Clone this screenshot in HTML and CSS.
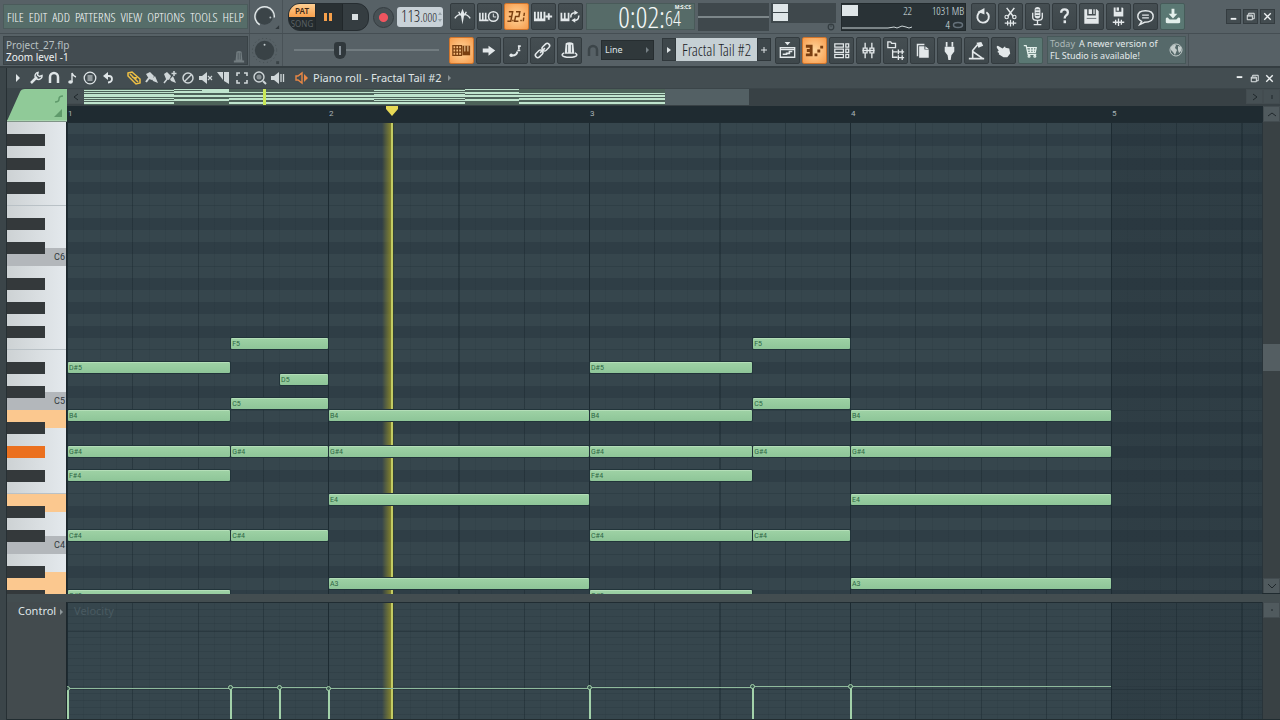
FILE: index.html
```html
<!DOCTYPE html>
<html lang="en">
<head>
<meta charset="utf-8">
<title>Piano roll - Fractal Tail #2</title>
<link rel="stylesheet" href="styles.css">
</head>
<body>
<header class="top">
  <div class="bar bar-one">
    <nav class="menu">
      <button>FILE</button><button>EDIT</button><button>ADD</button><button>PATTERNS</button><button>VIEW</button><button>OPTIONS</button><button>TOOLS</button><button>HELP</button>
    </nav>
    <button class="knob" aria-label="Main volume"><svg viewBox="0 0 34 34"><circle cx="15" cy="17" r="8.500" fill="#3b4448"/><path d="M10 25.500A10 10 0 1 1 25 18" fill="none" stroke="#e2e8e9" stroke-width="1.500"/><circle cx="21" cy="18" r="1" fill="#b9c2c5"/><path d="M26 30l4-4v4z" fill="#30383c"/></svg></button>
    <div class="transport">
      <div class="mode"><button class="pat">PAT</button><button class="song">SONG</button></div>
      <button class="pause" aria-label="Pause"><svg viewBox="0 0 26 26"><path d="M8 9h3v8H8zM13 9h3v8h-3z" fill="#f6a04b"/></svg></button>
      <button class="stop" aria-label="Stop"><svg viewBox="0 0 26 26"><path d="M9 10h6v6H9z" fill="#d9dfe1"/></svg></button>
    </div>
    <button class="record" aria-label="Record"></button>
    <div class="tempo"><span>113<small>.000</small></span><svg viewBox="0 0 6 16"><path d="M1 6l2-3 2 3zM1 10l2 3 2-3z" fill="#9aa5ab"/></svg></div>
    <div class="tools tools-a">
      <button class="tool" aria-label="Metronome"><svg viewBox="0 0 24 24"><path d="M4 14C7 8 17 8 20 14M8 7l2 4M16 7l-2 4" fill="none" stroke="currentColor" stroke-width="1.500"/><path d="M12 4l2 5-2 11-2-11z" fill="currentColor"/></svg></button>
      <button class="tool" aria-label="Wait for input"><svg viewBox="0 0 24 24"><path d="M2 8v8h9M5 8v8M8 8v8M2 16h8" fill="none" stroke="currentColor" stroke-width="1.700"/><circle cx="16" cy="12" r="5" fill="#434c50" stroke="currentColor" stroke-width="1.600"/><path d="M16 9v3.500h3" fill="none" stroke="currentColor"/></svg></button>
      <button class="tool lit" aria-label="Countdown"><svg viewBox="0 0 24 24"><path d="M4 7h4l-1 5H4M7 12l-1 5H2.500M11.500 7h4l-1 5h-3.500l-1 5h4" fill="none" stroke="currentColor" stroke-width="1.500"/><path d="M7.500 15.500H9V17H7.500zM16 15.500h1.500V17H16zM19.500 8H21l-.5 3.500H19zM18.800 13h1.500l-.5 4h-1.500z" fill="currentColor"/></svg></button>
      <button class="tool" aria-label="Overdub"><svg viewBox="0 0 24 24"><path d="M3 7v9h10V7M6.500 7v8M9.500 7v8M3 15h10" fill="none" stroke="currentColor" stroke-width="1.900"/><path d="M14 12h7M17.500 8.500v7" stroke="currentColor" stroke-width="2"/></svg></button>
      <button class="tool" aria-label="Loop recording"><svg viewBox="0 0 24 24"><path d="M2.500 8v8H10V8M6 8v7M2.500 15H10" fill="none" stroke="currentColor" stroke-width="1.800"/><path d="M12.500 13a4 4 0 0 1 4-5M20.500 11a4 4 0 0 1-4 5" fill="none" stroke="currentColor" stroke-width="1.600"/><path d="M16 5.500l4 2.500-4 2.500zM17 18.500L13 16l4-2.500z" fill="currentColor"/></svg></button>
    </div>
    <output class="clock"><b>0:02:</b><span class="cents"><small>M:S:CS</small><i>64</i></span></output>
    <div class="monitor"><div class="wave"></div><div class="meter"></div><svg viewBox="0 0 10 10"><circle cx="5" cy="5" r="3.500" fill="none" stroke="#343d41" stroke-width="1.500"/><path d="M5 5V2" stroke="#343d41"/></svg></div>
    <div class="cpu">
      <div class="load"><span class="block"></span><span class="num">22</span><svg viewBox="0 0 70 6"><path d="M0 4h46l6-1 3 1 5-2 4 1 3 1 3-1" fill="none" stroke="#cdd6d8"/></svg></div>
      <div class="mem"><span>1031 MB</span><span>4 <svg viewBox="0 0 12 8"><ellipse cx="6" cy="4" rx="4.500" ry="2.500" fill="none" stroke="#65717a" stroke-width="1.500"/></svg></span></div>
    </div>
    <div class="tools tools-b">
      <button class="tool" aria-label="Undo"><svg viewBox="0 0 24 24"><path d="M15 7.500A6 6 0 1 1 9 7" fill="none" stroke="currentColor" stroke-width="2"/><path d="M6 7l7-4v7z" fill="currentColor"/></svg></button>
      <button class="tool" aria-label="Cut"><svg viewBox="0 0 24 24"><path d="M8 3l7 9M16 3l-7 9" stroke="currentColor" stroke-width="1.600"/><circle cx="8" cy="12.500" r="1.800" fill="none" stroke="currentColor" stroke-width="1.200"/><circle cx="16" cy="12.500" r="1.800" fill="none" stroke="currentColor" stroke-width="1.200"/><path d="M6 19h12M9 16.500v5M12 15.500v7M15 16.500v5" stroke="currentColor" stroke-width="1.300"/></svg></button>
      <button class="tool" aria-label="Record audio"><svg viewBox="0 0 24 24"><rect x="9" y="2" width="6" height="12" rx="3" fill="currentColor"/><path d="M7 8v5q0 3 5 3t5-3V8M12 16v4M8 20.500h8" fill="none" stroke="currentColor" stroke-width="1.400"/><path d="M10 5h4M10 8h4M10 11h4" stroke="#566165"/></svg></button>
      <button class="tool" aria-label="Help"><svg viewBox="0 0 24 24"><path d="M8.500 8q0-3.500 3.500-3.500t3.500 3.200q0 2-2 3.300-1.300 1-1.300 3" fill="none" stroke="currentColor" stroke-width="2.400"/><path d="M11 16h2.600v3H11z" fill="currentColor"/></svg></button>
      <button class="tool" aria-label="Save"><svg viewBox="0 0 24 24"><path d="M4.500 4.500h3V11h9V4.500h1l2 2V19.500h-15z" fill="currentColor"/><path d="M9 4.500h3.500v5H9zM14 4.500h1.300v5H14z" fill="currentColor"/><path d="M7 14h10" stroke="#697377"/></svg></button>
      <button class="tool" aria-label="Save new version"><svg viewBox="0 0 24 24"><path d="M7 2.500h2V7h6V2.500h1l1 1V12H7z" fill="currentColor"/><path d="M10 2.500h2.500V6H10z" fill="currentColor"/><path d="M6 18h12M9 15.500v5M12 14v8M15 15.500v5" stroke="currentColor" stroke-width="1.400"/></svg></button>
      <button class="tool" aria-label="Project info"><svg viewBox="0 0 24 24"><path d="M8 17l-2 3.500 5-2.500q9 0 9-6 0-6-8-6t-8 6q0 3 4 5z" fill="none" stroke="currentColor" stroke-width="1.500"/><path d="M8.500 10.500h7M8.500 13.500h7" stroke="currentColor" stroke-width="1.300"/></svg></button>
      <button class="tool green" aria-label="Update"><svg viewBox="0 0 24 24"><path d="M11 4h3v5h3l-4.500 5L8 9h3z" fill="currentColor"/><path d="M5 14q0-1 2-1l2 2h7l2-2q2 0 2 1v4q0 1-2 1H7q-2 0-2-1z" fill="currentColor"/></svg></button>
    </div>
    <div class="win">
      <button aria-label="Minimise"><svg viewBox="0 0 14 14"><path d="M4 8.500h6v2H4z" fill="currentColor"/></svg></button>
      <button aria-label="Restore"><svg viewBox="0 0 14 14"><path d="M5 5V3.500h6v6H9.500M3.500 5.500h5.500v5H3.500zM3.500 6.500h5" fill="none" stroke="currentColor"/></svg></button>
      <button aria-label="Close"><svg viewBox="0 0 14 14"><path d="M3.500 3.500l7 7M10.500 3.500l-7 7" stroke="currentColor" stroke-width="1.500"/></svg></button>
    </div>
  </div>
  <div class="bar bar-two">
    <div class="hint"><div><p class="file">Project_27.flp</p><p class="msg">Zoom level -1</p></div><svg viewBox="0 0 14 16"><path d="M4 2q3-2 6 0l1 10H3zM1 12h12v2.500H1z" fill="#727c80"/><path d="M6 3v8M8.500 3v8" stroke="#4d575b"/></svg></div>
    <button class="knob" aria-label="Main pitch"><svg viewBox="0 0 34 34"><circle cx="15" cy="17" r="12.500" fill="none" stroke="#434c50" stroke-dasharray="1 3"/><circle cx="15" cy="17" r="10" fill="#394246"/><circle cx="15" cy="11" r="1" fill="#c5ced0"/><path d="M27 28h3v3h-3z" fill="#3a4347"/></svg></button>
    <div class="shift"><input type="range" min="0" max="100" value="30" aria-label="Song position"></div>
    <div class="tools tools-c">
      <button class="tool lit" aria-label="Typing keyboard to piano"><svg viewBox="0 0 24 24"><path d="M3 7h9v10H3zM6 7v10M9 7v10M3 10.300h9M3 13.600h9" fill="none" stroke="currentColor" stroke-width="1.300"/><path d="M13 7h8v10h-8z" fill="currentColor"/><path d="M15.500 7v6M18.700 7v6" stroke="#ffe0ae" stroke-width="1"/></svg></button>
      <button class="tool" aria-label="Step edit"><svg viewBox="0 0 24 24"><path d="M6 10h6V7l7 5-7 5.500V14H6z" fill="currentColor"/></svg></button>
      <button class="tool" aria-label="Glide"><svg viewBox="0 0 24 24"><path d="M7 17q6 1 7-4" fill="none" stroke="currentColor" stroke-width="2"/><circle cx="7.500" cy="17" r="1.800" fill="currentColor"/><path d="M14 12h3M15.500 11V7M14.500 7.500h3" stroke="currentColor" stroke-width="1.700"/></svg></button>
      <button class="tool" aria-label="Link"><svg viewBox="0 0 24 24" fill="none" stroke="currentColor" stroke-width="1.600"><rect x="11" y="6" width="9" height="5" rx="2.500" transform="rotate(-45 15.500 8.500)"/><rect x="4" y="13" width="9" height="5" rx="2.500" transform="rotate(-45 8.500 15.500)"/><path d="M9.500 14.500l5-5"/></svg></button>
      <button class="tool" aria-label="Multilink"><svg viewBox="0 0 24 24"><path d="M8 4.500q4-2 8 0l1 11H7z" fill="currentColor"/><path d="M6.500 14.500q-2.500 1-2 2.500 1 2 7.500 2t7.500-2q.5-1.500-2-2.500" fill="none" stroke="currentColor" stroke-width="1.600"/><path d="M10 6v8M14 6v8" stroke="#566165"/></svg></button>
    </div>
    <svg class="snap-icon" viewBox="0 0 12 14"><path d="M2 12V6a4 4 0 0 1 8 0v6" fill="none" stroke="#3c4549" stroke-width="2.500"/></svg>
    <button class="snap">Line<svg viewBox="0 0 4 6"><path d="M0 0l3 3-3 3z" fill="#768085"/></svg></button>
    <div class="pattern">
      <button class="side" aria-label="Pattern menu"><svg viewBox="0 0 8 8"><path d="M2 1l4 3-4 3z" fill="currentColor"/></svg></button>
      <button class="name">Fractal Tail #2</button>
      <button class="side" aria-label="Add pattern"><svg viewBox="0 0 8 8"><path d="M4 1v6M1 4h6" stroke="currentColor"/></svg></button>
    </div>
    <div class="tools tools-d">
      <button class="tool" aria-label="Playlist"><svg viewBox="0 0 24 24"><path d="M9 3h6l-3 3.500z" fill="currentColor"/><path d="M4.500 9h15v10h-15zM4.500 11h15" fill="none" stroke="currentColor" stroke-width="1.400"/><path d="M7 16h4v-1h3v-2h3" fill="none" stroke="currentColor" stroke-width="1.600"/></svg></button>
      <button class="tool lit" aria-label="Piano roll"><svg viewBox="0 0 24 24"><path d="M3 6h7v12H3v-3h4v-1.500H4v-3h3V9H3z" fill="currentColor"/><path d="M12 15h3v3h-3zM15 11h3v3h-3zM18 7h3v3h-3z" fill="currentColor"/></svg></button>
      <button class="tool" aria-label="Channel rack"><svg viewBox="0 0 24 24" fill="none" stroke="currentColor" stroke-width="1.300"><path d="M5 5h9v3.500H5zM5 10.500h9V14H5zM5 16h9v3.500H5zM16.500 5h3v3.500h-3zM16.500 10.500h3V14h-3zM16.500 16h3v3.500h-3z"/></svg></button>
      <button class="tool" aria-label="Mixer"><svg viewBox="0 0 24 24" fill="none" stroke="currentColor" stroke-width="1.400"><path d="M8.500 4v5M8.500 15v5M15.500 4v5M15.500 15v5M6.500 9.500h4v5h-4zM13.500 9.500h4v5h-4zM5.500 12h13"/></svg></button>
      <button class="tool" aria-label="Browser"><svg viewBox="0 0 24 24" fill="none" stroke="currentColor" stroke-width="1.400"><path d="M4 3h3l1 1.500h4V9H4zM9 11v8h5M9 13.500h5"/><path d="M15 11v5M15 17v5M19 11v5M19 17v5M14 13.500h7M14 19.500h7"/></svg></button>
      <button class="tool" aria-label="Patterns"><svg viewBox="0 0 24 24"><path d="M6 5h8v1.500H7.500V18H6z" fill="currentColor"/><path d="M8.500 7.500H14V11h4.500v8.500h-10zM15 7.500l3.500 3H15z" fill="currentColor"/></svg></button>
      <button class="tool" aria-label="Plugins"><svg viewBox="0 0 24 24"><path d="M9 3v5M15 3v5" stroke="currentColor" stroke-width="1.800"/><path d="M7 8h10v5l-3 4-.8 5h-2.400L10 17l-3-4z" fill="currentColor"/></svg></button>
      <button class="tool" aria-label="Tempo tapper"><svg viewBox="0 0 24 24"><path d="M12 4l5-1 2 4-5 2z" fill="currentColor"/><path d="M13 6L8 12v8M8 13l10 7M4 20.500h16" fill="none" stroke="currentColor" stroke-width="1.700"/></svg></button>
      <button class="tool" aria-label="Touch controller"><svg viewBox="0 0 24 24"><path d="M5 7.500q1-1 2 0l4 2.500 2-2q1-.5 1 1l4 1 1 5-3 4h-4l-5-3 .5-1.500-2-1L7 12l-2-3z" fill="currentColor"/></svg></button>
      <button class="tool green" aria-label="Shop"><svg viewBox="0 0 24 24" fill="none" stroke="currentColor" stroke-width="1.300"><path d="M5 7h2.500l2 9H18M8 9h10l-1 5H9M12 9v5M15 9v5M8.500 11.500h9"/><circle cx="10.500" cy="18" r="1"/><circle cx="16.500" cy="18" r="1"/></svg></button>
    </div>
    <a class="news" href="#"><span><em>Today</em>A newer version of<br>FL Studio is available!</span><svg viewBox="0 0 14 14"><circle cx="7" cy="7" r="6" fill="none" stroke="#c3cccb" stroke-width="1"/><path d="M2 4q3-3 5-2L6 5l2 2-2 5-2-3-2-2zM9 3l3 1v4l-2 2-1-3z" fill="#c3cccb"/></svg></a>
    <div class="rest"></div>
  </div>
</header>

<main class="roll">
  <div class="title">
    <div class="acts">
      <button aria-label="Menu"><svg viewBox="0 0 16 16"><path d="M6 4l4 4-4 4z" fill="currentColor"/></svg></button>
      <button aria-label="Tools"><svg viewBox="0 0 16 16"><path d="M3 13l6-6" stroke="currentColor" stroke-width="2.500"/><path d="M14 5.500A3.500 3.500 0 1 1 10 2.500L9.500 5l2 1.500z" fill="none" stroke="currentColor" stroke-width="1.500"/></svg></button>
      <button aria-label="Snap"><svg viewBox="0 0 16 16"><path d="M4 13V7a4 4 0 0 1 8 0v6" fill="none" stroke="currentColor" stroke-width="2.500"/></svg></button>
      <button aria-label="Stamp"><svg viewBox="0 0 16 16"><path d="M8 12V3q1 3 4 4" fill="none" stroke="currentColor" stroke-width="1.400"/><ellipse cx="6.500" cy="12" rx="2.300" ry="1.800" fill="currentColor"/></svg></button>
      <button aria-label="Ghost notes"><svg viewBox="0 0 16 16"><circle cx="8" cy="8" r="5.800" fill="none" stroke="currentColor" stroke-width="1.300"/><path d="M5.500 6h5M5.500 8h5M5.500 10h5" stroke="currentColor"/></svg></button>
      <button aria-label="Undo"><svg viewBox="0 0 16 16"><path d="M5 6h4q3 0 3 3t-4 3.500" fill="none" stroke="currentColor" stroke-width="1.800"/><path d="M8 2v8L3 6z" fill="currentColor"/></svg></button>
    </div>
    <div class="acts brushes">
      <button class="draw" aria-label="Draw"><svg viewBox="0 0 16 16"><path d="M2 3l4-1 8 7v4l-4 1-8-8zM4 4l8 8M6 7l5 1" fill="none" stroke="currentColor" stroke-width="1.500"/></svg></button>
      <button aria-label="Paint"><svg viewBox="0 0 16 16"><path d="M2 4l4-2 4 4-2 4-3-1zM8 9l3-3 3 7-5-2z" fill="currentColor"/><path d="M2 12l3-4" stroke="currentColor" stroke-width="2"/></svg></button>
      <button aria-label="Paint sequence"><svg viewBox="0 0 16 16"><path d="M2 4l3-2 4 4-2 4-3-1zM8 9l3-3 3 7-5-2z" fill="currentColor"/><path d="M2 13l4-5M12 1v5M9.500 3.500h5" stroke="currentColor" stroke-width="1.500"/></svg></button>
      <button aria-label="Delete"><svg viewBox="0 0 16 16"><circle cx="8" cy="8" r="5" fill="none" stroke="currentColor" stroke-width="1.500"/><path d="M4.500 11.500l7-7" stroke="currentColor" stroke-width="1.500"/></svg></button>
      <button aria-label="Mute"><svg viewBox="0 0 16 16"><path d="M1 6h3l5-4v12L4 10H1z" fill="currentColor"/><path d="M10 6l4 4M14 6l-4 4" stroke="currentColor" stroke-width="1.200"/></svg></button>
      <button aria-label="Slice"><svg viewBox="0 0 16 16"><path d="M1 2h6v8zM8 2h5v12l-5-3z" fill="currentColor"/></svg></button>
      <button aria-label="Select"><svg viewBox="0 0 16 16"><path d="M6 3H3v3M10 3h3v3M6 13H3v-3M10 13h3v-3" fill="none" stroke="currentColor" stroke-width="1.600"/></svg></button>
      <button aria-label="Zoom"><svg viewBox="0 0 16 16"><circle cx="7" cy="7" r="5" fill="none" stroke="currentColor" stroke-width="1.400"/><circle cx="7" cy="7" r="2.500" fill="currentColor" opacity=".5"/><path d="M11 11l3 3" stroke="currentColor" stroke-width="2"/></svg></button>
      <button aria-label="Playback"><svg viewBox="0 0 16 16"><path d="M1 6h3l5-4v12L4 10H1z" fill="currentColor"/><path d="M11 4v8M13.500 4v8" stroke="currentColor" stroke-width="1.300"/></svg></button>
    </div>
    <svg class="speaker" viewBox="0 0 14 14"><path d="M1 5h2l4-3v10L3 9H1z" fill="none" stroke="#e98745" stroke-width="1.400"/><path d="M9 3l4 4-4 4z" fill="#e98745"/></svg>
    <h1>Piano roll - Fractal Tail #2</h1>
    <svg class="chev" viewBox="0 0 4 6"><path d="M0 0l3 3-3 3z" fill="#868f92"/></svg>
    <div class="win flat">
      <button aria-label="Minimise roll"><svg viewBox="0 0 14 14"><path d="M4 4.500h6v2H4z" fill="currentColor"/></svg></button>
      <button aria-label="Restore roll"><svg viewBox="0 0 14 14"><path d="M5 5V3.500h6v6H9.500M3.500 5.500h5.500v5H3.500zM3.500 6.500h5" fill="none" stroke="currentColor"/></svg></button>
      <button aria-label="Close roll"><svg viewBox="0 0 14 14"><path d="M3.500 3.500l7 7M10.500 3.500l-7 7" stroke="currentColor" stroke-width="1.500"/></svg></button>
    </div>
  </div>

  <div class="head">
    <svg class="corner" viewBox="0 0 60 33"><path d="M0 32L13 3q1-3 5-3h42v32z" fill="#90ca98"/><path d="M0 32h60" stroke="#c3e3c6"/><path d="M48 13q4 0 4-3t4-3" fill="none" stroke="#5f9a6b" stroke-width="1.500"/><path d="M47 28l8-8v8z" fill="#5f9a6b"/></svg>
    <div class="rails">
      <div class="scroller">
        <button class="arrow" aria-label="Scroll left"><svg viewBox="0 0 8 8"><path d="M6 1L2 4l4 3" fill="none" stroke="#1f272b"/></svg></button>
        <svg class="overview" viewBox="0 0 665 16"><rect width="665" height="16" fill="#536064"/><rect width="581" height="16" fill="#4d6259"/>
          <g fill="#bfe4cd"><path d="M0 1h90v1H0zM0 3h90v1H0zM0 5h90v3H0zM0 9h90v1H0zM0 11h90v1H0zM0 13h90v2H0z"/><path d="M90 0h55v1H90zM118 1h27v2h-27zM90 2h55v2H90zM90 6h55v2H90zM90 10h55v2H90z"/><path d="M145 3h145v1H145zM145 6h145v2H145zM145 9h145v2H145zM145 13h145v2H145z"/><path d="M290 1h91v1h-91zM290 3h91v1h-91zM290 5h91v3h-91zM290 9h91v1h-91zM290 11h91v1h-91zM290 13h91v2h-91z"/><path d="M381 0h54v1h-54zM381 3h54v2h-54zM381 6h54v2h-54zM381 10h54v2h-54z"/><path d="M435 4h146v1H435zM435 6h146v2H435zM435 9h146v2H435zM435 13h146v2H435z"/></g>
          <rect x="179" width="3" height="16" fill="#c9e857"/></svg>
        <button class="arrow end" aria-label="Scroll right"><svg viewBox="0 0 8 8"><path d="M2 1l4 3-4 3" fill="none" stroke="#1f272b"/></svg></button>
        <button class="arrow" aria-label="Zoom"><svg viewBox="0 0 8 8"><path d="M4 2v4" stroke="#1f272b"/></svg></button>
      </div>
      <div class="ruler">
        <ol><li>1</li><li>2</li><li>3</li><li>4</li><li>5</li></ol>
        <svg class="marker" viewBox="0 0 12 10"><path d="M0 0h12v3L6 10 0 3z" fill="#e7d956"/></svg>
        <button class="arrow" aria-label="Scroll up"><svg viewBox="0 0 8 8"><path d="M0 6l4-3 4 3" fill="none" stroke="#1f272b"/></svg></button>
      </div>
    </div>
  </div>

  <div class="editor">
    <div class="piano">
      <span class="key c" style="--row:11">C6</span><span class="key c" style="--row:23">C5</span><span class="key c" style="--row:35">C4</span>
      <span class="key hot down" style="--row:24"></span><span class="key hot down" style="--row:31"></span><span class="key hot up" style="--row:38"></span>
      <span class="blacks"></span><span class="key sharp" style="--row:27"></span>
    </div>
    <div class="grid">
      <span class="playhead"></span>
      <span class="note" style="--start:10;--len:6;--row:18">F5</span>
      <span class="note" style="--start:42;--len:6;--row:18">F5</span>
      <span class="note" style="--start:0;--len:10;--row:20">D#5</span>
      <span class="note" style="--start:32;--len:10;--row:20">D#5</span>
      <span class="note" style="--start:13;--len:3;--row:21">D5</span>
      <span class="note" style="--start:10;--len:6;--row:23">C5</span>
      <span class="note" style="--start:42;--len:6;--row:23">C5</span>
      <span class="note" style="--start:0;--len:10;--row:24">B4</span>
      <span class="note" style="--start:16;--len:16;--row:24">B4</span>
      <span class="note" style="--start:32;--len:10;--row:24">B4</span>
      <span class="note" style="--start:48;--len:16;--row:24">B4</span>
      <span class="note" style="--start:0;--len:10;--row:27">G#4</span>
      <span class="note" style="--start:10;--len:6;--row:27">G#4</span>
      <span class="note" style="--start:16;--len:16;--row:27">G#4</span>
      <span class="note" style="--start:32;--len:10;--row:27">G#4</span>
      <span class="note" style="--start:42;--len:6;--row:27">G#4</span>
      <span class="note" style="--start:48;--len:16;--row:27">G#4</span>
      <span class="note" style="--start:0;--len:10;--row:29">F#4</span>
      <span class="note" style="--start:32;--len:10;--row:29">F#4</span>
      <span class="note" style="--start:16;--len:16;--row:31">E4</span>
      <span class="note" style="--start:48;--len:16;--row:31">E4</span>
      <span class="note" style="--start:0;--len:10;--row:34">C#4</span>
      <span class="note" style="--start:10;--len:6;--row:34">C#4</span>
      <span class="note" style="--start:32;--len:10;--row:34">C#4</span>
      <span class="note" style="--start:42;--len:6;--row:34">C#4</span>
      <span class="note" style="--start:16;--len:16;--row:38">A3</span>
      <span class="note" style="--start:48;--len:16;--row:38">A3</span>
      <span class="note" style="--start:0;--len:10;--row:39">G#3</span>
      <span class="note" style="--start:32;--len:10;--row:39">G#3</span>
    </div>
    <div class="vscroll"><span class="thumb"></span><button class="arrow" aria-label="Scroll down"><svg viewBox="0 0 8 8"><path d="M0 2l4 4 4-4" fill="none" stroke="#1f272b"/></svg></button></div>
  </div>

  <div class="control">
    <button class="lane">Control<svg viewBox="0 0 4 6"><path d="M0 0l3 3-3 3z" fill="#8e979a"/></svg></button>
    <div class="velocity">
      <span class="lane-name">Velocity</span>
      <span class="playhead"></span>
      <span class="vel" style="--start:0;--len:10;--v:31"></span>
      <span class="vel" style="--start:10;--len:3;--v:32"></span>
      <span class="vel" style="--start:13;--len:3;--v:32"></span>
      <span class="vel" style="--start:16;--len:16;--v:31"></span>
      <span class="vel" style="--start:32;--len:10;--v:32"></span>
      <span class="vel" style="--start:42;--len:6;--v:33"></span>
      <span class="vel" style="--start:48;--len:16;--v:33"></span>
    </div>
    <div class="vscroll"><button class="arrow" aria-label="Lane zoom"><svg viewBox="0 0 8 8"><path d="M4 3v2" stroke="#1f272b"/></svg></button></div>
  </div>
</main>
</body>
</html>
```
FILE: styles.css
```css
:root {
  --bar: 261px;
  --step: calc(var(--bar) / 16);
  --ui: "Noto Sans", "Open Sans", sans-serif;
  --narrow: "Open Sans Condensed Light", "Noto Sans Condensed", "Liberation Sans Narrow", "Roboto Condensed", "Open Sans Condensed", sans-serif;
}
*, *::before { box-sizing: border-box; }
body {
  margin: 0;
  min-height: 100vh;
  display: flex;
  flex-direction: column;
  background: #3b4549;
  color: #dfe5e7;
  font: 11px/12px var(--ui);
  overflow: hidden;
}
button { border: 0; padding: 0; margin: 0; background: none; color: inherit; font: inherit; cursor: pointer; }
svg { display: block; flex: none; }
p, h1, ol { margin: 0; padding: 0; }

/* top toolbars */
.top { background: #576166; border-bottom: 2px solid #343d41; }
.bar { display: flex; align-items: stretch; padding-left: 3px; height: 34px; }
.bar-one { border-bottom: 1px solid #454e53; }
.bar-two { height: 32px; }
.menu {
  display: flex; justify-content: space-between; align-items: center;
  width: 245px; margin: 4px 0 4px; padding: 0 3px;
  background: #566d69; border: 1px solid #4b5b5b;
  font: 13px/16px var(--narrow); color: #f6faf9;
}
.knob { width: 34px; margin: 0 1px; border: solid #495257; border-width: 0 1px; }
.knob svg { width: 33px; height: 33px; }
.transport {
  display: flex; width: 81px; height: 28px; margin: 3px 0 0 4px; overflow: hidden;
  border-radius: 12px; background: #353d41; border: 1px solid #262d31;
}
.mode { display: flex; flex-direction: column; width: 26px; background: #242b2e; font-size: 8px; }
.mode button { height: 13px; width: 26px; line-height: 12px; }
.pat { background: linear-gradient(#ffcf92, #f7a04d); color: #3f2a17; font-weight: 600; }
.song { color: #596064; }
.transport > button { flex: 1; border-left: 1px solid #21272a; }
.transport svg { width: 26px; height: 26px; }
.pause { background: #293033; }
.record { width: 21px; height: 21px; margin: 7px 3px 0 4px; border-radius: 50%; border: 1px solid #343c40; background: radial-gradient(circle, #f0555f 0 4px, #485155 5px); }
.tempo {
  display: flex; align-items: center; justify-content: space-between;
  width: 46px; height: 20px; margin: 7px 7px 0 0; padding: 0 1px 0 4px;
  background: #c9d2d8; color: #1b2226; border-radius: 3px; font: 16px/20px var(--narrow);
}
.tempo small { font-size: 12px; }
.tempo svg { width: 6px; height: 16px; }
.tools { display: flex; gap: 2px; align-items: center; }
.tool {
  width: 25px; height: 27px; display: grid; place-items: center;
  background: linear-gradient(#454e52, #3e474b); border: 1px solid #333b3f; border-radius: 2px; color: #e3e8ea;
}
.tool svg { width: 23px; height: 23px; }
.tool.lit { background: radial-gradient(#ffd79e, #f79b4b); border-color: #d0752c; color: #7a3f10; }
.tool.green { background: #5a7873; border-color: #465b59; color: #e3efeb; }
.clock {
  display: flex; align-items: flex-start; justify-content: flex-end;
  width: 109px; margin: 3px; padding-right: 3px;
  background: #566b68; border: 1px solid #495a59;
  font: 29px/25px var(--narrow); color: #f4f8f7;
}
.clock b { font-weight: 300; }
.cents { display: flex; flex-direction: column; width: 26px; }
.clock i { font-style: normal; font-size: 20px; line-height: 18px; }
.clock small { align-self: flex-end; font: bold 5px/6px var(--ui); }
.monitor { display: grid; grid-template: 20px 8px / 73px 65px; justify-items: end; width: 138px; height: 28px; margin: 3px 0 0; }
.wave { width: 71px; grid-row: 1 / 3; justify-self: start; background: linear-gradient(#3f484c 13px, #7c8689 13px 15px, #3f484c 15px); }
.monitor svg { width: 10px; height: 8px; }
.meter { width: 65px; height: 20px; background: linear-gradient(#dfe6e8, #dfe6e8) 2px 1px / 15px 8px no-repeat, linear-gradient(#dfe6e8, #dfe6e8) 2px 10px / 15px 8px no-repeat, #3f484c; }
.cpu { display: flex; width: 125px; height: 28px; margin: 3px 5px 0; background: #293236; border: 1px solid #21292c; font: 11px/14px var(--narrow); }
.load { display: grid; grid-template-columns: 16px 1fr; grid-template-rows: 20px 6px; width: 70px; }
.block { height: 11px; margin-top: 1px; background: #dfe6e8; }
.num { text-align: right; }
.load svg { grid-column: 1 / 3; width: 70px; height: 6px; }
.mem { flex: 1; display: flex; flex-direction: column; padding-right: 1px; white-space: nowrap; }
.mem span { display: flex; justify-content: flex-end; align-items: center; gap: 2px; }
.mem svg { width: 12px; height: 8px; }
.win { display: flex; gap: 2px; align-items: center; margin-left: auto; margin-right: 5px; }
.win button { width: 15px; height: 15px; background: #434c50; border: 1px solid #343c40; color: #edf1f2; }
.win svg { width: 13px; height: 13px; }

.hint {
  display: flex; justify-content: space-between; align-items: center;
  width: 245px; margin: 2px 0 1px; padding: 0 2px;
  background: #434c51; border: 1px solid #394246; font: 10px/12px var(--ui);
}
.file { color: #b8c0c3; }
.msg { color: #eef1f2; }
.hint svg { width: 12px; height: 14px; align-self: flex-end; }
.shift { display: flex; align-items: center; width: 165px; }
.shift input { appearance: none; width: 145px; margin: 0 0 0 10px; height: 24px; background: linear-gradient(#727c80, #727c80) center / 100% 2px no-repeat; }
.shift input::-webkit-slider-thumb { appearance: none; width: 12px; height: 17px; border-radius: 4px 4px 7px 7px; background: linear-gradient(#88929a, #88929a) center / 2px 9px no-repeat, #30383c; }
.tools-a { width: 133px; }
.snap-icon { width: 12px; height: 14px; margin: 10px 2px 0 5px; }
.snap { display: flex; justify-content: space-between; align-items: center; width: 53px; height: 20px; margin: 6px 8px 0 0; padding: 0 3px; background: #30383b; border: 1px solid #262d30; font-size: 9px; }
.snap svg { width: 4px; height: 6px; }
.pattern { display: flex; width: 109px; height: 23px; margin: 4px 4px 0 0; }
.pattern .side { width: 14px; display: grid; place-items: center; background: #3e474b; border: 1px solid #30383c; }
.side svg { width: 8px; height: 8px; }
.pattern .name { flex: 1; background: #c6d0d4; color: #1b2226; font: 16px/22px var(--narrow); white-space: nowrap; }
.news {
  display: flex; justify-content: space-between; align-items: center;
  width: 139px; margin: 2px 2px 2px 4px; padding: 0 2px 0 2px;
  background: #56696a; border: 1px solid #475859; color: #e4eaea; text-decoration: none; font: 9px/12px var(--ui); white-space: nowrap;
}
.news em { font-style: normal; color: #acb8b8; margin-right: 4px; }
.news svg { width: 14px; height: 14px; }
.rest { flex: 1; border-left: 1px solid #495257; }

/* piano roll window */
.roll { flex: 1; display: flex; flex-direction: column; margin-left: 6px; border-left: 1px solid #273034; }
.title { display: flex; align-items: center; height: 20px; background: #434d51; }
.acts { display: flex; gap: 2px; margin-left: 3px; }
.acts svg { width: 16px; height: 16px; }
.brushes { margin-left: 10px; color: #cfd6d8; }
.draw { color: #efc044; }
.speaker { width: 14px; height: 14px; margin: 0 4px 0 9px; }
.title h1 { font: 11px/18px var(--ui); color: #dfe4e5; }
.chev { width: 4px; height: 6px; margin-left: 6px; }
.win.flat { margin-right: 3px; gap: 1px; }
.win.flat button { background: none; border: 0; width: 14px; }
.head { display: flex; height: 33px; margin-top: 1px; background: #3b4549; }
.corner { width: 60px; height: 33px; }
.rails { flex: 1; display: flex; flex-direction: column; }
.scroller { display: flex; height: 17px; background: #384145; }
.arrow { width: 17px; height: 16px; display: grid; place-items: center; background: #505a5e; border: 1px solid #434c50; }
.arrow svg { width: 8px; height: 8px; }
.scroller .arrow { height: 15px; background: #465054; }
.end { margin-left: auto; }
.overview { width: 665px; height: 16px; }
.ruler { position: relative; flex: 1; display: flex; justify-content: space-between; background: #1f2b31; }
.ruler ol { display: flex; list-style: none; font: 8px/16px Roboto, sans-serif; color: #aab4b7; }
.ruler li { width: var(--bar); padding-left: 1px; }
.ruler li:last-child { width: auto; }
.marker { position: absolute; left: 319px; top: 0; width: 12px; height: 10px; }

.editor { flex: 1; display: flex; min-height: 472px; }
.piano {
  position: relative; width: 60px; overflow: hidden; border-right: 1px solid #1d272c;
  background:
    repeating-linear-gradient(transparent 0 83px, #b9c1c6 83px 84px, transparent 84px 144px),
    linear-gradient(90deg, #cdd2d4, #e4e9ed);
}
.blacks {
  position: absolute; left: 0; top: 0; bottom: 0; width: 38px;
  --k: #34393b;
  background: repeating-linear-gradient(transparent 0 12px, var(--k) 12px 24px, transparent 24px 36px, var(--k) 36px 48px, transparent 48px 60px, var(--k) 60px 72px, transparent 72px 96px, var(--k) 96px 108px, transparent 108px 120px, var(--k) 120px 132px, transparent 132px 144px);
}
.key { position: absolute; left: 0; right: 0; top: calc(var(--row) * 12px); height: 12px; }
.key.c { top: calc(var(--row) * 12px - 6px); height: 18px; padding: 4px 1px 0 0; text-align: right; background: #b3b7bb; color: #31383b; font: 9px/10px Roboto, sans-serif; clip-path: polygon(38px 0, 100% 0, 100% 100%, 0 100%, 0 6px, 38px 6px); }
.key.hot { background: #fbc88f; }
.key.down { height: 18px; clip-path: polygon(0 0, 100% 0, 100% 100%, 38px 100%, 38px 12px, 0 12px); }
.key.up { top: calc(var(--row) * 12px - 6px); height: 24px; }
.key.sharp { right: auto; width: 38px; background: #eb701e; }

.grid, .velocity { position: relative; flex: 1; overflow: hidden; border-top: 1px solid #202c32; }
.grid, .velocity {
  --bars: repeating-linear-gradient(90deg, #1d2b32 0 1px, transparent 1px var(--bar));
  --beats: repeating-linear-gradient(90deg, rgba(24, 38, 45, .35) 0 1px, transparent 1px calc(var(--bar) / 4));
  --steps: repeating-linear-gradient(90deg, rgba(24, 38, 45, .1) 0 1px, transparent 1px var(--step));
  --tail: linear-gradient(90deg, transparent calc(var(--bar) * 4), rgba(30, 42, 50, .3) calc(var(--bar) * 4));
}
.grid {
  --d: #2f3e46;
  --l: #36464d;
  background: var(--bars), var(--beats), var(--steps), var(--tail),
    repeating-linear-gradient(var(--l) 0 11px, var(--d) 11px 23px, var(--l) 23px 35px, var(--d) 35px 47px, var(--l) 47px 59px, var(--d) 59px 71px, var(--l) 71px 82px, #2f3f46 82px 83px, var(--l) 83px 95px, var(--d) 95px 107px, var(--l) 107px 119px, var(--d) 119px 131px, var(--l) 131px 143px, #2f3f46 143px 144px);
}
.note {
  position: absolute; left: calc(var(--start) * var(--step) + 1px); top: calc(var(--row) * 12px - 1px);
  width: calc(var(--len) * var(--step) - 1px); height: 11px; padding-left: 1px;
  background: linear-gradient(#9dd1a4, #8ec598); border-top: 1px solid #b4deb8; border-radius: 1px;
  box-shadow: 0 0 0 1px #22343a; color: #2d6644; font: 7px/10px Roboto, sans-serif;
}
.playhead { position: absolute; left: 315px; top: 0; bottom: 0; width: 12px; background: linear-gradient(90deg, rgba(150, 145, 40, 0), rgba(150, 145, 40, .8) 9px, #c3cb62 9px 11px, rgba(60, 70, 40, .5) 11px); }
.vscroll { display: flex; flex-direction: column; justify-content: flex-end; width: 18px; background: #394144; border-left: 1px solid #29343a; }
.thumb { height: 27px; margin: 0 0 auto; background: #545e62; }
.editor .vscroll::before { content: ""; flex: 0 0 222px; }
.control { display: flex; height: 118px; margin-top: 8px; border-bottom: 1px solid #222d31; box-shadow: 0 -8px #434d50, 0 -9px #202b30; }
.lane { display: flex; justify-content: space-between; width: 60px; padding: 3px 2px 0 11px; background: #434b4e; align-items: flex-start; border-right: 1px solid #1d272c; font: 11px/12px var(--ui); }
.lane svg { width: 4px; height: 6px; margin-top: 4px; }
.velocity {
  background: var(--bars), var(--beats), var(--steps), var(--tail),
    repeating-linear-gradient(transparent 0 28px, rgba(24, 38, 45, .4) 28px 29px, transparent 29px 58px),
    repeating-linear-gradient(transparent 0 6px, rgba(24, 38, 45, .16) 6px 7px), #36464d;
}
.lane-name { display: block; padding: 2px 7px; color: #495a61; }
.vel { position: absolute; left: calc(var(--start) * var(--step)); bottom: 0; width: calc(var(--len) * var(--step)); height: calc(var(--v) * 1px); border-top: 1px solid #8fba9c; border-left: 2px solid #a3d2aa; }
.vel::before { content: ""; position: absolute; left: -4px; top: -3px; width: 5px; height: 5px; border: 1px solid #a3d2aa; border-radius: 50%; background: #3b5650; }
.control .vscroll { justify-content: flex-start; }
```
